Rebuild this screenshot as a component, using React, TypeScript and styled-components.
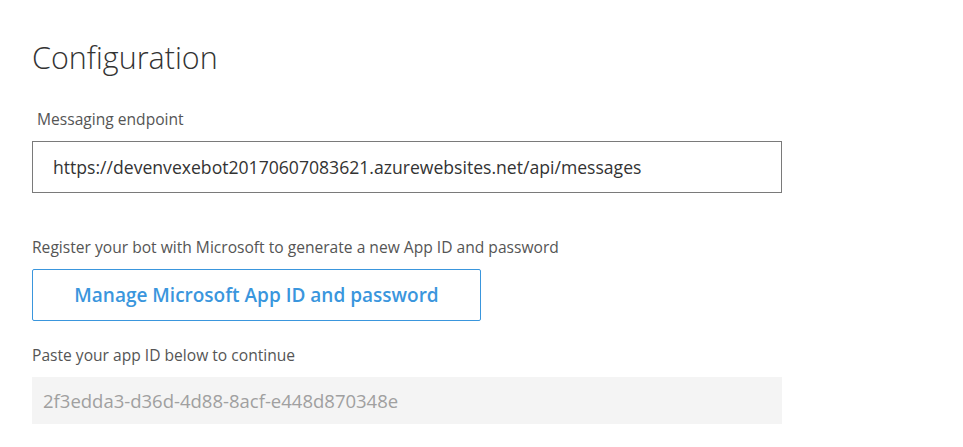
import React from "react";
import styled, { createGlobalStyle } from "styled-components";

const Global = createGlobalStyle`
  html, body { margin: 0; padding: 0; background: #fff; }
  body { font-family: "Open Sans", "Noto Sans", sans-serif; color: #333; }
`;

const Page = styled.div`
  width: 963px;
  height: 447px;
  box-sizing: border-box;
  padding: 37px 0 0 32px;
  overflow: hidden;
`;

const Title = styled.h1`
  margin: 0;
  font-size: 30.5px;
  font-weight: 300;
  line-height: 40px;
  color: #333;
`;

const Label = styled.div<{ $indent?: number; $top: number }>`
  margin-top: ${(p) => p.$top}px;
  padding-left: ${(p) => p.$indent ?? 0}px;
  font-size: 15.6px;
  line-height: 20px;
  color: #555;
`;

const Field = styled.div<{ $variant: "outline" | "filled"; $top: number }>`
  box-sizing: border-box;
  width: 750px;
  margin-top: ${(p) => p.$top}px;
  display: flex;
  align-items: center;
  ${(p) =>
    p.$variant === "outline"
      ? `height: 52px; border: 1px solid #7a7a7a; padding-left: 20px; color: #333; font-size: 17.6px;`
      : `height: 47px; background: #f4f4f4; padding-left: 11px; color: #a0a0a0; font-size: 18.5px;`}
`;

const Button = styled.button`
  box-sizing: border-box;
  margin-top: 12px;
  width: 449px;
  height: 52px;
  border: 1px solid #3a96dd;
  border-radius: 2px;
  background: #fff;
  color: #3a96dd;
  font-family: inherit;
  font-size: 19px;
  font-weight: 600;
  display: block;
  cursor: pointer;
`;

export default function App() {
  return (
    <>
      <Global />
      <Page>
        <Title>Configuration</Title>
        <Label $indent={5} $top={32}>Messaging endpoint</Label>
        <Field $variant="outline" $top={12}>
          https://devenvexebot20170607083621.azurewebsites.net/api/messages
        </Field>
        <Label $top={44}>Register your bot with Microsoft to generate a new App ID and password</Label>
        <Button>Manage Microsoft App ID and password</Button>
        <Label $top={24}>Paste your app ID below to continue</Label>
        <Field $variant="filled" $top={12}>2f3edda3-d36d-4d88-8acf-e448d870348e</Field>
      </Page>
    </>
  );
}
